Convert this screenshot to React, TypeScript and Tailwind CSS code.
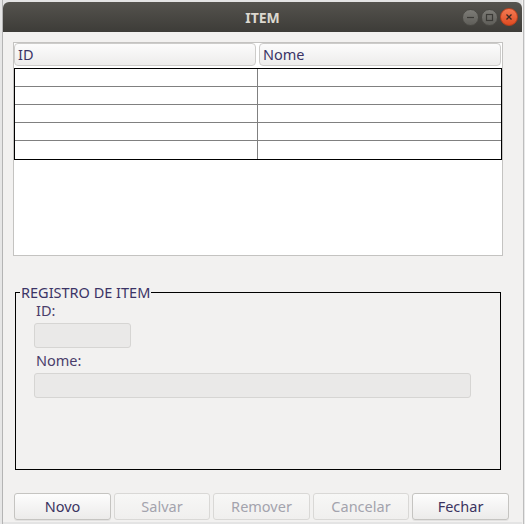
import React from "react";

const font = { fontFamily: '"Noto Sans", "DejaVu Sans", sans-serif' };

function TitleButton({ kind }: { kind: "min" | "max" | "close" }) {
  if (kind === "close") {
    return (
      <div className="flex h-[18px] w-[18px] items-center justify-center rounded-full border border-[#b8401e] bg-gradient-to-b from-[#f47a52] to-[#df4a1f]">
        <svg width="8" height="8" viewBox="0 0 8 8">
          <path d="M1.5 1.5 L6.5 6.5 M6.5 1.5 L1.5 6.5" stroke="#3a2a24" strokeWidth="1.3" />
        </svg>
      </div>
    );
  }
  return (
    <div className="flex h-[17px] w-[17px] items-center justify-center rounded-full border border-[#4a4944] bg-gradient-to-b from-[#7d7c77] to-[#5f5e59]">
      <svg width="9" height="9" viewBox="0 0 9 9">
        {kind === "min" ? (
          <path d="M1 4.5 H8" stroke="#3b3a36" strokeWidth="1.2" />
        ) : (
          <rect x="1.5" y="1.5" width="6" height="6" fill="none" stroke="#3b3a36" strokeWidth="1.2" />
        )}
      </svg>
    </div>
  );
}

function HeaderCell({ label }: { label: string }) {
  return (
    <div className="flex h-[23px] w-[242px] items-center rounded-[4px] border border-[#cdccca] bg-gradient-to-b from-[#fcfcfc] to-[#edeceb] pl-[3px] text-[14.5px] text-[#3b3466]">
      {label}
    </div>
  );
}

function Btn({ label, w, disabled }: { label: string; w: string; disabled?: boolean }) {
  return (
    <button
      className={
        "flex h-[27px] items-center justify-center rounded-[3px] border bg-gradient-to-b text-[14.5px] " +
        w +
        (disabled
          ? " border-[#d9d8d6] from-[#f7f7f6] to-[#f0efee] text-[#a3a3ad]"
          : " border-[#c5c4c1] from-[#fdfdfd] to-[#ecebea] text-[#3b3460] shadow-[0_1px_0_rgba(0,0,0,0.06)]")
      }
    >
      {label}
    </button>
  );
}

export default function App() {
  const rows = [0, 1, 2, 3, 4];
  return (
    <div className="flex h-[524px] w-[525px] overflow-hidden bg-[#e4e4e4]" style={font}>
      <div className="h-full w-[3px] border-r border-[#b4b4b4] bg-[#e6e6e6]" />
      <div className="mt-[2px] flex h-[520px] w-[519px] flex-col">
        {/* title bar */}
        <div className="relative flex h-[30px] items-center justify-center rounded-t-[6px] bg-gradient-to-b from-[#55534e] to-[#3d3c38]">
          <span className="text-[14px] font-bold text-[#dcd8cf]">ITEM</span>
          <div className="absolute right-[4px] top-[6px] flex items-center gap-[2px]">
            <TitleButton kind="min" />
            <TitleButton kind="max" />
            <TitleButton kind="close" />
          </div>
        </div>

        {/* body */}
        <div className="flex flex-1 flex-col bg-[#f2f1f0]">
          {/* table */}
          <div className="ml-[10px] mt-[10px] flex h-[214px] w-[490px] flex-col border border-[#c4c3c1] bg-white">
            <div className="flex gap-[3px]">
              <HeaderCell label="ID" />
              <HeaderCell label="Nome" />
            </div>
            <div className="mt-[2px] w-[488px] border-[1.5px] border-black">
              {rows.map((r) => (
                <div
                  key={r}
                  className={"flex h-[18px] " + (r < rows.length - 1 ? "border-b border-[#808080]" : "")}
                >
                  <div className="w-[243px] border-r border-[#808080]" />
                  <div className="flex-1" />
                </div>
              ))}
            </div>
          </div>

          {/* fieldset */}
          <fieldset className="ml-[12px] mt-[28px] h-[186px] w-[486px] border border-black">
            <legend className="ml-[4px] px-[1px] text-[14.5px] leading-[16px] text-[#3b3466]">
              REGISTRO DE ITEM
            </legend>
            <div className="pl-[18px]">
              <div className="ml-[2px] mt-[2px] text-[14.5px] leading-[17px] text-[#4a3d6a]">ID:</div>
              <div className="mt-[4px] h-[25px] w-[97px] rounded-[3px] border border-[#d6d5d3] bg-[#eae9e8]" />
              <div className="ml-[2px] mt-[4px] text-[14.5px] leading-[17px] text-[#4a3d6a]">Nome:</div>
              <div className="mt-[4px] h-[25px] w-[437px] rounded-[3px] border border-[#d6d5d3] bg-[#eae9e8]" />
            </div>
          </fieldset>

          {/* buttons */}
          <div className="ml-[11px] mt-[23px] flex gap-[3px]">
            <Btn label="Novo" w="w-[97px]" />
            <Btn label="Salvar" w="w-[96px]" disabled />
            <Btn label="Remover" w="w-[97px]" disabled />
            <Btn label="Cancelar" w="w-[96px]" disabled />
            <Btn label="Fechar" w="w-[97px]" />
          </div>
        </div>
      </div>
      <div className="h-full w-[1px] bg-[#f2f1f0]" />
      <div className="h-full w-[1px] bg-[#bdbdbd]" />
      <div className="h-full flex-1 bg-[#e8e8e8]" />
    </div>
  );
}
